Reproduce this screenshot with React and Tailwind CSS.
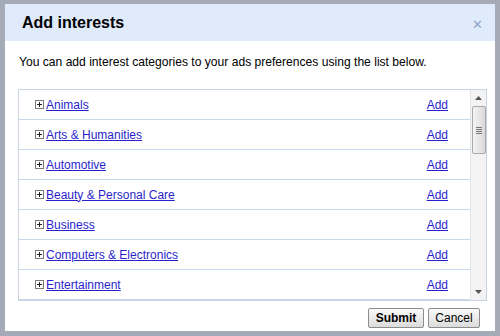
import React from 'react';

const categories = [
  'Animals',
  'Arts & Humanities',
  'Automotive',
  'Beauty & Personal Care',
  'Business',
  'Computers & Electronics',
  'Entertainment',
];

const PlusBox = () => (
  <svg width="9" height="9" viewBox="0 0 9 9" className="shrink-0">
    <rect x="0.5" y="0.5" width="8" height="8" fill="#fff" stroke="#7a7a7a" />
    <path d="M2 4.5h5M4.5 2v5" stroke="#222" strokeWidth="1" />
  </svg>
);

const Scrollbar = () => (
  <div className="w-[16px] shrink-0 bg-[#f3f3f3] border-l border-[#e6e6e6] flex flex-col items-center">
    <div className="h-[16px] w-full flex items-center justify-center">
      <svg width="7" height="4" viewBox="0 0 7 4">
        <path d="M0 4L3.5 0L7 4Z" fill="#555" />
      </svg>
    </div>
    <div className="w-[14px] h-[48px] rounded-[2px] border border-[#a9a9a9] bg-gradient-to-r from-[#f4f4f4] to-[#d9d9d9] flex flex-col items-center justify-center gap-[1px]">
      <div className="w-[6px] h-[1px] bg-[#777]" />
      <div className="w-[6px] h-[1px] bg-[#777]" />
      <div className="w-[6px] h-[1px] bg-[#777]" />
      <div className="w-[6px] h-[1px] bg-[#777]" />
    </div>
    <div className="flex-1" />
    <div className="h-[16px] w-full flex items-center justify-center">
      <svg width="7" height="4" viewBox="0 0 7 4">
        <path d="M0 0L3.5 4L7 0Z" fill="#555" />
      </svg>
    </div>
  </div>
);

export default function App() {
  return (
    <div
      className="w-[500px] h-[336px] bg-white border-[5px] border-t-[4px] border-[#a4aab6] flex flex-col text-black overflow-hidden"
      style={{ fontFamily: '"Liberation Sans", Arial, sans-serif' }}
    >
      {/* Header */}
      <div className="h-[37px] shrink-0 bg-[#dfeafb] flex items-center justify-between pl-[17px] pr-[12px]">
        <h1 className="text-[16px] font-bold leading-none">Add interests</h1>
        <span className="text-[13px] leading-none text-[#8fa6c8] mt-[3px]">✕</span>
      </div>

      {/* Body */}
      <div className="flex-1 flex flex-col pt-[14px] px-[13px]">
        <p className="text-[12.1px] leading-[14px] pl-[1px]">
          You can add interest categories to your ads preferences using the list below.
        </p>

        <div className="mt-[20px] mr-[-5px] h-[212px] shrink-0 border border-[#c9d3e0] flex overflow-hidden">
          <div className="flex-1 overflow-hidden">
            {categories.map((c) => (
              <div
                key={c}
                className="h-[30px] border-b border-[#c8d8ee] flex items-center pl-[16px] pr-[22px]"
              >
                <div className="flex items-center gap-[2px] flex-1">
                  <PlusBox />
                  <a className="text-[12px] text-[#2a1fcc] underline">{c}</a>
                </div>
                <a className="text-[12px] text-[#2a1fcc] underline">Add</a>
              </div>
            ))}
            <div className="h-[30px]" />
          </div>
          <Scrollbar />
        </div>

        <div className="flex justify-end gap-[4px] mt-[7px] mr-[2px]">
          <button className="h-[20px] w-[56px] text-[12px] font-bold leading-none rounded-[2px] border border-[#8c8c8c] bg-gradient-to-b from-[#fafafa] to-[#dcdcdc]">
            Submit
          </button>
          <button className="h-[20px] w-[52px] text-[12px] leading-none rounded-[2px] border border-[#8c8c8c] bg-gradient-to-b from-[#fafafa] to-[#dcdcdc]">
            Cancel
          </button>
        </div>
      </div>
    </div>
  );
}
